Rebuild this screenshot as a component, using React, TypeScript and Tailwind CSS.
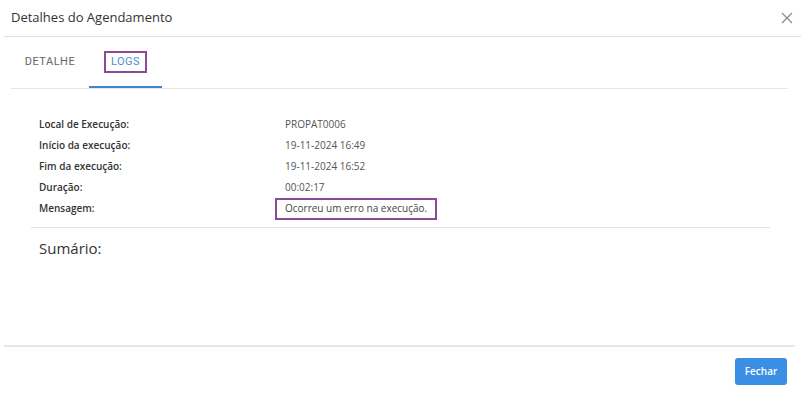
import React from "react";

const rows: { label: string; value: string; boxed?: boolean }[] = [
  { label: "Local de Execução:", value: "PROPAT0006" },
  { label: "Início da execução:", value: "19-11-2024 16:49" },
  { label: "Fim da execução:", value: "19-11-2024 16:52" },
  { label: "Duração:", value: "00:02:17" },
  { label: "Mensagem:", value: "Ocorreu um erro na execução.", boxed: true },
];

export default function App() {
  return (
    <div className="w-[805px] h-[398px] bg-white flex flex-col font-['Open_Sans',sans-serif] text-[#333]">
      {/* Header */}
      <div className="mx-[4px] h-[37px] flex items-center justify-between border-b border-[#dedede] pl-[7px] pr-[8px]">
        <span className="text-[13px] text-[#333] pb-[1px]">Detalhes do Agendamento</span>
        <button className="text-[#8a8a8a]" aria-label="Fechar">
          <svg className="w-[12px] h-[12px]" viewBox="0 0 12 12" fill="none" stroke="currentColor" strokeWidth={1.2}>
            <path d="M1 1l10 10M11 1L1 11" />
          </svg>
        </button>
      </div>

      {/* Tabs */}
      <div className="mx-[11px] mr-[17px] h-[52px] flex items-end border-b border-[#e6e6e6]">
        <div className="w-[78px] h-[50px] flex items-center justify-center pb-[1px] font-['Roboto',sans-serif] text-[11px] tracking-[0.5px] text-[#666]">
          DETALHE
        </div>
        <div className="w-[73px] h-[50px] flex items-center justify-center border-b-2 border-[#3f86d0] font-['Roboto',sans-serif] text-[11px] tracking-[0.5px] text-[#4b8fd0]">
          <span className="border-2 border-[#8a4a98] px-[5px] h-[22px] flex items-center">LOGS</span>
        </div>
      </div>

      {/* Content */}
      <div className="mx-[31px] w-[739px] pt-[25px]">
        <div className="flex flex-col px-[8px]">
          {rows.map((r) => (
            <div key={r.label} className="h-[21px] flex items-center text-[10px]">
              <span className="w-[246px] font-semibold text-[#333]">{r.label}</span>
              {r.boxed ? (
                <span className="ml-[-10px] h-[22px] px-[8px] flex items-center border-2 border-[#8a4a98] text-[#444]">
                  {r.value}
                </span>
              ) : (
                <span className="text-[#555]">{r.value}</span>
              )}
            </div>
          ))}
        </div>
        <div className="mt-[8px] border-t border-[#e3e3e3]" />
        <div className="pl-[8px] pt-[9px] text-[15px] text-[#333]">Sumário:</div>
      </div>

      {/* Footer */}
      <div className="mt-auto mx-[4px] mr-[10px] border-t-2 border-[#e6e6e6] h-[53px] flex items-start justify-end pt-[11px] pr-[8px]">
        <button className="w-[52px] h-[27px] rounded-[3px] bg-[#3a8ee3] text-white text-[10px] font-semibold">
          Fechar
        </button>
      </div>
    </div>
  );
}
